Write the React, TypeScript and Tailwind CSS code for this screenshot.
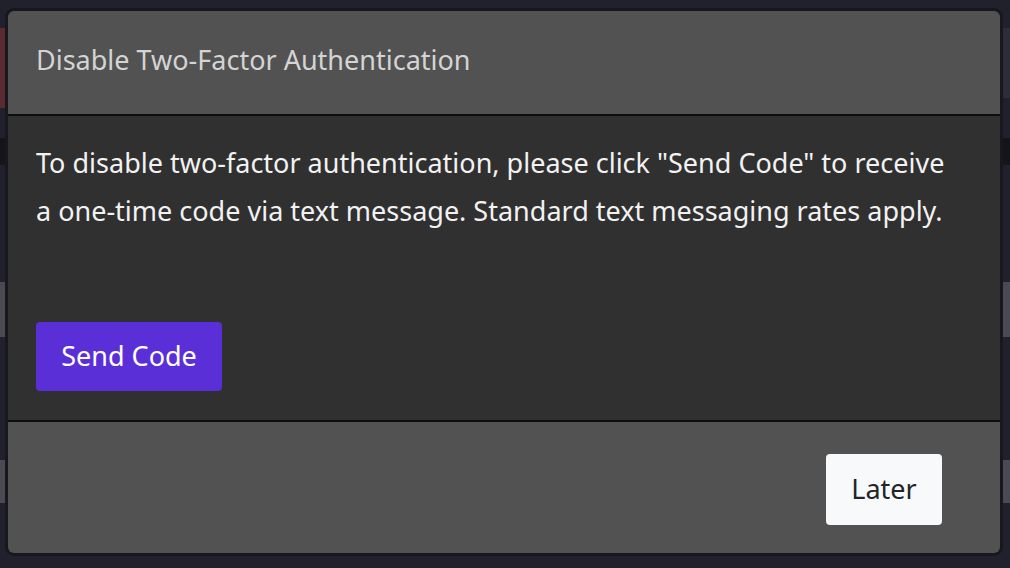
import * as React from "react";

export default function App() {
  return (
    <div className="relative h-[568px] w-[1010px] overflow-hidden bg-[#21202d] font-['Noto_Sans',sans-serif]">
      {/* page behind the backdrop */}
      <div className="flex flex-col pt-[28px]">
        <div className="flex h-[80px]">
          <div className="w-[40px] bg-[#5a2a31]" />
          <div className="flex-1 h-[70px] bg-[#2d2c39]" />
        </div>
        <div className="mt-[30px] h-[27px] bg-[#151419]" />
        <div className="mt-[117px] h-[55px] bg-[#4b4a52]" />
        <div className="mt-[123px] h-[43px] bg-[#4b4a52]" />
      </div>

      {/* modal */}
      <div className="absolute left-[5px] top-[8px] w-[998px] rounded-[9px] border-[3px] border-[#18171d] bg-[#18171d]">
        <div className="overflow-hidden rounded-[6px]">
          <div className="flex h-[105px] items-center border-b-2 border-[#0d0d0d] bg-[#525252] px-[28px] pb-[6px]">
            <h2 className="text-[27px] leading-[36px] text-[#d4d4d4]">
              Disable Two-Factor Authentication
            </h2>
          </div>
          <div className="bg-[#303030] px-[28px] pt-[23px] pb-[29px]">
            <p className="mb-[87px] text-[27px] leading-[48px] text-[#f2f2f2]">
              To disable two-factor authentication, please click "Send Code" to receive
              <br />
              a one-time code via text message. Standard text messaging rates apply.
            </p>
            <button className="flex h-[69px] w-[186px] items-center justify-center rounded-[4px] bg-[#5b2fd8] text-[27px] text-white">
              Send Code
            </button>
          </div>
          <div className="flex h-[133px] justify-end border-t-2 border-[#0d0d0d] bg-[#525252] pt-[32px] pr-[58px]">
            <button className="flex h-[71px] w-[116px] items-center justify-center rounded-[4px] bg-[#f8f9fa] text-[27px] text-[#212529]">
              Later
            </button>
          </div>
        </div>
      </div>
    </div>
  );
}
